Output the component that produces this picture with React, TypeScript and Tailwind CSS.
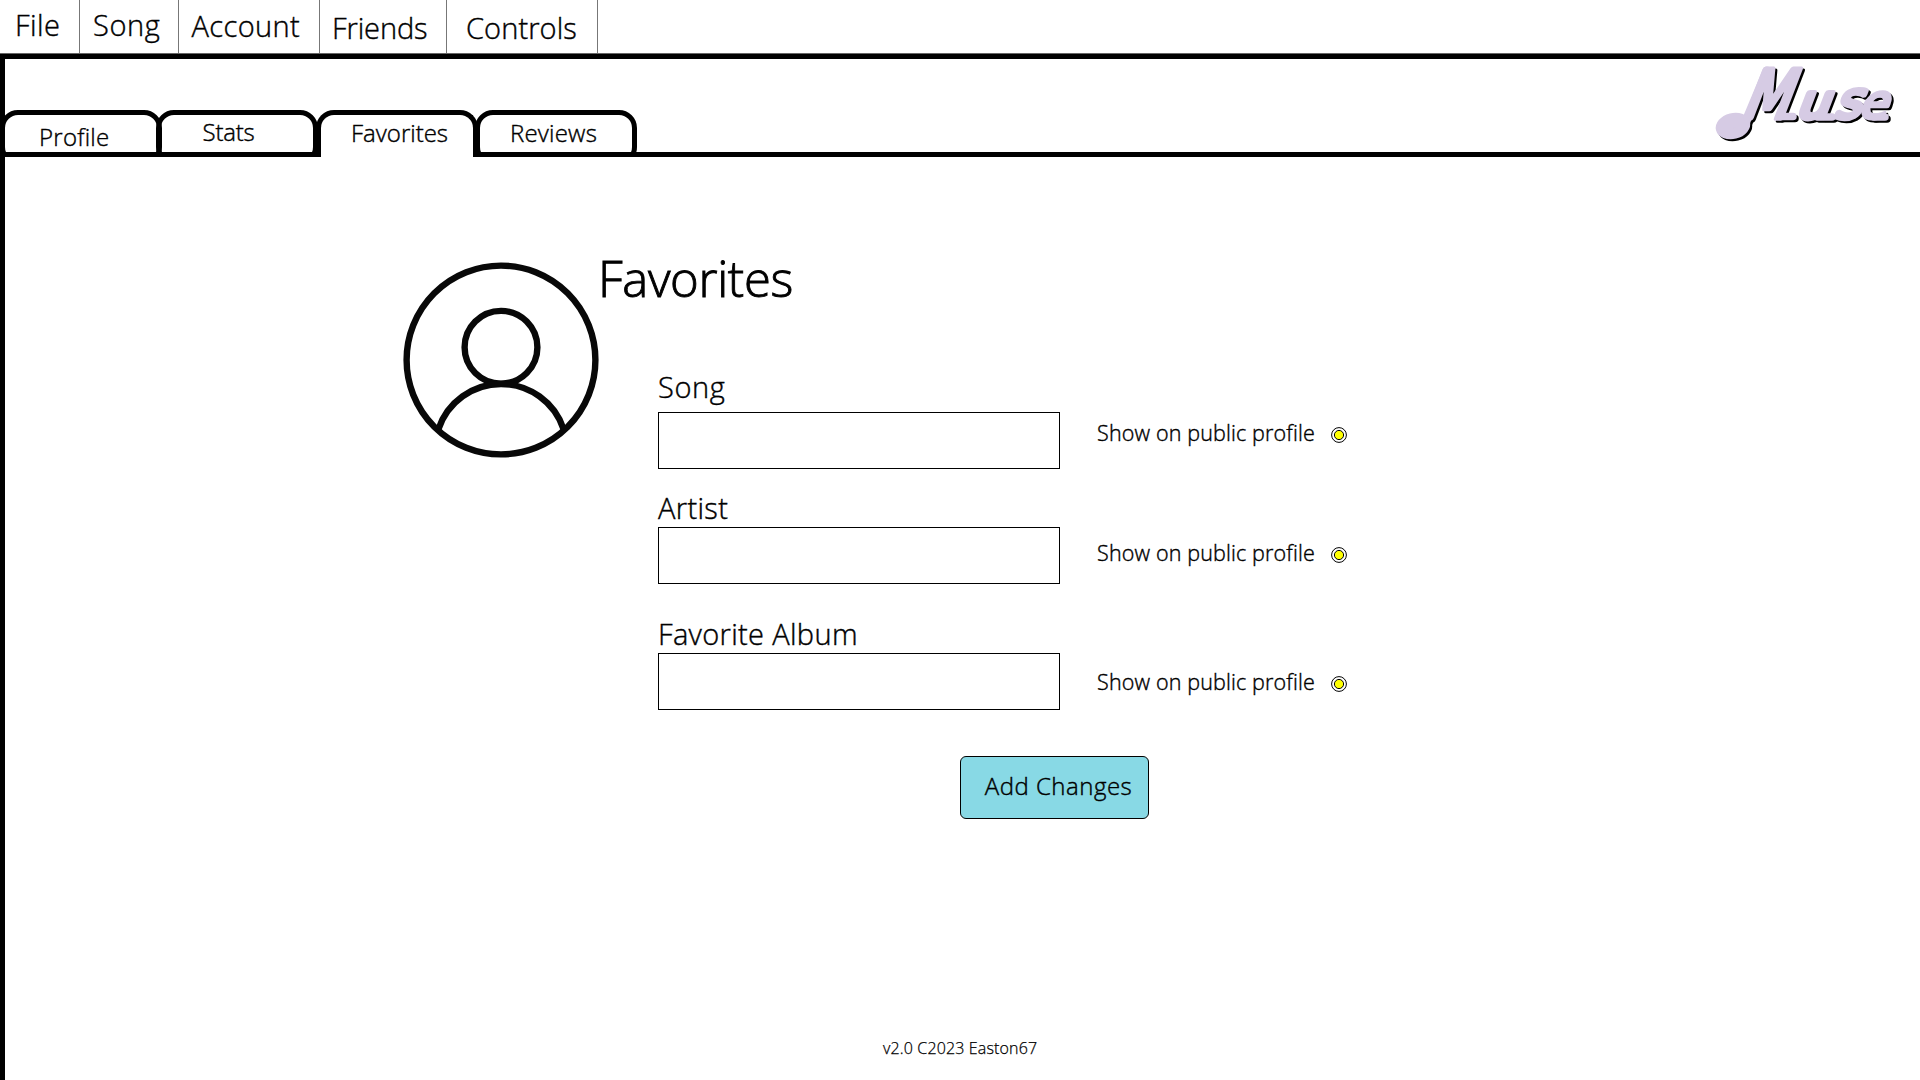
import React from "react";

const menu = [
  { label: "File", cell: "w-[80px] pl-[15px] pt-[5px] tracking-[0.4px]" },
  { label: "Song", cell: "w-[99px] pl-[13px] pt-[5px] tracking-[0.6px]" },
  { label: "Account", cell: "w-[141px] pl-[12.5px] pt-[6px] tracking-[0.4px]" },
  { label: "Friends", cell: "w-[127px] pl-[12px] pt-[8px] tracking-[-0.1px]" },
  { label: "Controls", cell: "w-[151px] pl-[19px] pt-[8px] tracking-[0.1px]" },
];

const tabs = [
  { label: "Profile", active: false, box: "w-[162px]", text: "pl-[34px] pt-[7px] tracking-[0.25px]" },
  { label: "Stats", active: false, box: "-ml-[6px] w-[162px]", text: "pl-[41.5px] pt-[2px] tracking-[-0.2px]" },
  { label: "Favorites", active: true, box: "-ml-[2px] w-[162px]", text: "pl-[30px] pt-[3px]" },
  { label: "Reviews", active: false, box: "-ml-[3px] w-[162px]", text: "pl-[30px] pt-[3px] tracking-[0.2px]" },
];

const fields = [
  { label: "Song", block: "", title: "h-[45px] tracking-[0.6px]", toggle: "mt-[6px]" },
  { label: "Artist", block: "mt-[19px]", title: "h-[39px] tracking-[0.35px]", toggle: "mt-[11px]" },
  { label: "Favorite Album", block: "mt-[30px]", title: "h-[39px] tracking-[0.33px]", toggle: "mt-[14px]" },
];

function LogoLayer() {
  return (
    <>
      <ellipse cx="17" cy="75" rx="17.5" ry="13" transform="rotate(-14 17 75)" stroke="none" />
      <path d="M51 20 L33 63 Q28 78 18 82" fill="none" strokeWidth="9" strokeLinecap="round" />
      <path d="M64 65.5 H77 M108 66 H116 M158 66 H169" fill="none" strokeWidth="7.5" strokeLinecap="round" />
      <text
        transform="translate(25 66.5) skewX(-21) scale(.88 1)"
        strokeWidth="5.5"
        strokeLinejoin="round"
        fontFamily="'DejaVu Sans Condensed', 'DejaVu Sans', sans-serif"
        fontSize="67"
        fontWeight="400"
      >
        M
      </text>
      <text
        transform="translate(82 66.5) skewX(-21) scale(1.1 1)"
        strokeWidth="5.5"
        strokeLinejoin="round"
        fontFamily="'DejaVu Sans', sans-serif"
        fontSize="46"
        fontWeight="400"
      >
        <tspan x="-2.5">u</tspan>
        <tspan x="32" fontSize="51" strokeWidth="5" fontFamily="'DejaVu Sans Condensed', 'DejaVu Sans', sans-serif">s</tspan>
        <tspan x="54" strokeWidth="3.8" fontFamily="'DejaVu Sans Condensed', 'DejaVu Sans', sans-serif">e</tspan>
      </text>
    </>
  );
}

function Logo() {
  return (
    <svg className="mr-[20px] mt-[-8px] h-[98px] w-[184px] overflow-visible [-webkit-text-stroke:0]" viewBox="0 0 184 98" role="img" aria-label="Muse">
      <g transform="translate(2 2)" fill="#000" stroke="#000" aria-hidden="true">
        <LogoLayer />
      </g>
      <g fill="#d6cbe4" stroke="#d6cbe4">
        <LogoLayer />
      </g>
    </svg>
  );
}

function Avatar() {
  return (
    <svg className="h-[200px] w-[200px] shrink-0" viewBox="0 0 200 200" fill="none" stroke="#080808" strokeWidth="6.4">
      <circle cx="100" cy="100" r="94.4" />
      <circle cx="100" cy="87.3" r="36.4" />
      <path d="M37.5 169 A65.9 65.9 0 0 1 162.5 169" />
    </svg>
  );
}

function Radio() {
  return (
    <svg className="mt-[9px] h-4 w-4" viewBox="0 0 16 16" stroke="#000">
      <circle cx="8" cy="8" r="7.4" fill="#fff" />
      <circle cx="8" cy="8" r="4.6" fill="#ffff00" />
    </svg>
  );
}

export default function App() {
  return (
    <div className="flex h-[1080px] w-[1920px] flex-col overflow-hidden bg-white font-['Open_Sans',sans-serif] font-light text-black [-webkit-text-stroke:0.4px_black]">
      <nav className="flex h-[54px] shrink-0 border-b border-[#666]">
        {menu.map((m) => (
          <div key={m.label} className={`border-r border-[#777] text-[29px] leading-[40px] ${m.cell}`}>
            {m.label}
          </div>
        ))}
      </nav>

      <div className="flex min-h-0 flex-1 flex-col border-l-[5px] border-t-[5px] border-black">
        <header className="-ml-[5px] flex h-[98px] shrink-0 items-end">
          {tabs.map((t) =>
            t.active ? (
              <div key={t.label} className={`h-[47px] rounded-t-[18px] border-x-[5px] border-t-[5px] border-black ${t.box}`}>
                <div className={`text-2xl leading-[30px] ${t.text}`}>{t.label}</div>
              </div>
            ) : (
              <div key={t.label} className={`h-[47px] overflow-hidden border-b-[5px] border-black ${t.box}`}>
                <div className="h-[55px] rounded-[18px] border-[5px] border-black">
                  <div className={`text-2xl leading-[30px] ${t.text}`}>{t.label}</div>
                </div>
              </div>
            ),
          )}
          <div className="-ml-[2px] flex h-full flex-1 justify-end border-b-[5px] border-black">
            <Logo />
          </div>
        </header>

        <main className="flex flex-1 pl-[396px] pt-[103px]">
          <Avatar />
          <div className="-ml-[3px] flex flex-1 flex-col">
            <h1 className="-mt-[12px] h-[119px] text-[49px] leading-[61px] tracking-[-0.35px] [-webkit-text-stroke:0.9px_black]">
              Favorites
            </h1>
            <form className="ml-[60px] flex flex-col">
              {fields.map((f) => (
                <div key={f.label} className={`flex flex-col ${f.block}`}>
                  <label className={`text-[29px] leading-[40px] ${f.title}`}>{f.label}</label>
                  <div className="flex h-[57px] items-start">
                    <div className="h-[57px] w-[402px] border border-black" />
                    <div className={`ml-[37px] flex ${f.toggle}`}>
                      <span className="w-[234px] whitespace-nowrap text-[21.5px] leading-[30px] tracking-[0.15px]">
                        Show on public profile
                      </span>
                      <Radio />
                    </div>
                  </div>
                </div>
              ))}
              <button
                type="button"
                className="ml-[302px] mt-[46px] h-[63px] w-[189px] rounded-[6px] border border-black bg-[#88d9e5] pb-[3px] pl-[8px] text-2xl leading-[40px] tracking-[0.5px]"
              >
                Add Changes
              </button>
            </form>
          </div>
        </main>

        <footer className="h-[44px] shrink-0 pl-[878px] text-base leading-6 tracking-[0.15px] [-webkit-text-stroke:0.25px_black]">v2.0 C2023 Easton67</footer>
      </div>
    </div>
  );
}
